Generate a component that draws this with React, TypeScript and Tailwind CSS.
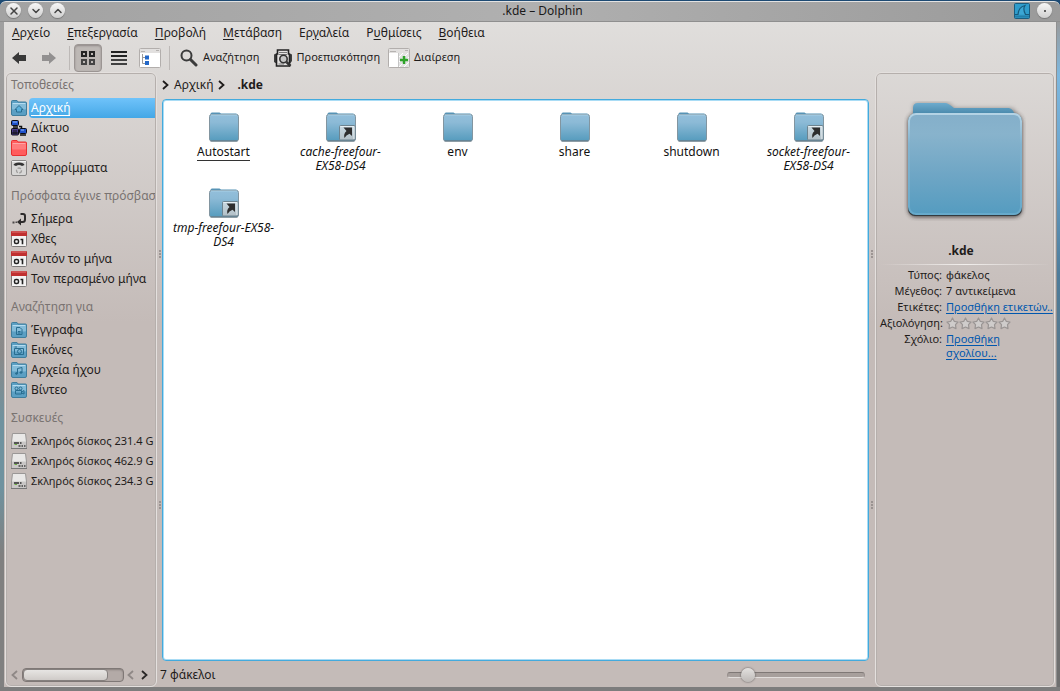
import type { ReactNode } from "react";
import { ChevronDown, ChevronUp, X } from "lucide-react";

type Place = { label: string; icon: ReactNode; active?: boolean };

const menus = [
  ["", "Α", "ρχείο"],
  ["", "Ε", "πεξεργασία"],
  ["", "Π", "ροβολή"],
  ["", "Μ", "ετάβαση"],
  ["Ερ", "γ", "αλεία"],
  ["Ρ", "υ", "θμίσεις"],
  ["", "Β", "οήθεια"],
];

const files = [
  { lines: ["Autostart"], current: true },
  { lines: ["cache-freefour-", "EX58-DS4"], link: true },
  { lines: ["env"] },
  { lines: ["share"] },
  { lines: ["shutdown"] },
  { lines: ["socket-freefour-", "EX58-DS4"], link: true },
  { lines: ["tmp-freefour-EX58-", "DS4"], link: true },
];

function Arrow({ left, className = "" }: { left?: boolean; className?: string }) {
  return (
    <svg aria-hidden="true" viewBox="0 0 7 10" className={`h-2.5 w-[7px] shrink-0 ${className}`} fill="none" stroke="currentColor" strokeWidth="1.8">
      <path d={left ? "M6 1L1.500 5L6 9" : "M1 1L5.500 5L1 9"} />
    </svg>
  );
}

function PlaceFolder({ tone = "blue", children }: { tone?: "blue" | "red"; children?: ReactNode }) {
  const red = tone === "red";
  return (
    <svg aria-hidden="true" viewBox="0 0 16 16" className="h-4 w-4 shrink-0">
      <path d="M.5 4V1.5Q.5.5 1.5.5H6L7 2H14.5Q15.5 2 15.5 3V14Q15.5 15.5 14 15.5H2Q.5 15.5.5 14Z" fill={red ? "#ff5c5c" : "#5b9fc3"} stroke={red ? "#e83030" : "#3f7d9c"} />
      <rect x="1" y="3.5" width="14" height="6" rx="1" fill={red ? "#ff8585" : "#8fc3de"} opacity=".8" />
      <path d="M1.5 3.5H14.5" stroke={red ? "#ffa5a5" : "#b5dcf0"} />
      {children && (
        <g fill="none" stroke="#286d90" strokeWidth="1">
          {children}
        </g>
      )}
    </svg>
  );
}

function NetworkIcon() {
  return (
    <svg aria-hidden="true" viewBox="0 0 16 16" className="h-4 w-4 shrink-0">
      <rect x=".5" y=".5" width="7" height="5" rx="1" fill="#1f50c8" stroke="#0b0b14" />
      <path d="M2 2H6" stroke="#8db8ff" />
      <path d="M2 7H7M8 6.500H10.500V8" fill="none" stroke="#111" strokeWidth="1.500" />
      <rect x=".5" y="8.500" width="7" height="6.500" rx="1" fill="#4a3c8c" stroke="#0b0b14" />
      <path d="M1 13H7M3 10V14M5 10V14" stroke="#111" />
      <rect x="8.500" y="8.500" width="7" height="5" rx="1" fill="#1f50c8" stroke="#0b0b14" />
      <path d="M10 10H13" stroke="#8db8ff" />
      <path d="M9 15H15" stroke="#111" strokeWidth="1.500" />
    </svg>
  );
}

function TrashIcon() {
  return (
    <svg aria-hidden="true" viewBox="0 0 16 16" className="h-4 w-4 shrink-0">
      <rect x=".5" y=".5" width="15" height="15" rx="1.500" fill="#d8d7d6" stroke="#898786" />
      <path d="M1 1.500H15" stroke="#f2f2f2" />
      <path d="M2.500 5Q3 2.500 8 2.500T13.500 5L11 6Q8 4 5 6Z" fill="#333" />
      <circle cx="8" cy="10.500" r="2.500" fill="none" stroke="#a09e9d" strokeWidth="1.300" strokeDasharray="3.500 1.500" />
    </svg>
  );
}

function TodayIcon() {
  return (
    <svg aria-hidden="true" viewBox="0 0 16 16" className="h-4 w-4 shrink-0">
      <path d="M9.500 3H12Q14 3 14 5V8.500Q14 11 11.500 11H8" fill="none" stroke="#2d2b2b" strokeWidth="2" />
      <path d="M10 7.500V14.500L6 11Z" fill="#2d2b2b" />
      <path d="M1.500 10.500H3.500V12.500H1.500ZM4.500 10.500H6V12H4.500Z" fill="#4c4949" />
    </svg>
  );
}

function CalendarIcon() {
  return (
    <svg aria-hidden="true" viewBox="0 0 16 16" className="h-4 w-4 shrink-0">
      <rect x=".5" y="1" width="15" height="14.500" rx="1" fill="#f4f3f3" stroke="#7e7b7a" />
      <path d="M0 1Q0 0 1 0H15Q16 0 16 1V5H0Z" fill="#c03030" />
      <path d="M1 1H15" stroke="#de7777" />
      <rect x="3.500" y="8.500" width="4" height="4" rx="1.500" fill="none" stroke="#222" strokeWidth="1.500" />
      <path d="M9.500 8.500H11.500V13.200" fill="none" stroke="#222" strokeWidth="1.600" />
    </svg>
  );
}

function DiskIcon() {
  return (
    <svg aria-hidden="true" viewBox="0 0 16 16" className="h-4 w-4 shrink-0">
      <path d="M1.500 .5H14.500L15.500 9V15.500H.5V9Z" fill="#e9e8e7" stroke="#9a9796" />
      <rect x="1" y="8.500" width="14" height="6.500" fill="#c9c7c6" />
      <path d="M3 10H8M9 10H10.500" stroke="#555" strokeWidth="1.800" />
      <path d="M3.500 11.500H6" stroke="#6fae45" />
      <path d="M7.500 13H9.500M10.500 13H12M13 13H14.500" stroke="#444" strokeWidth="1.600" />
      <path d="M0 15.500H16" stroke="#777" />
    </svg>
  );
}

const sections: { title: string; compact?: boolean; items: Place[] }[] = [
  {
    title: "Τοποθεσίες",
    items: [
      { label: "Αρχική", active: true, icon: <PlaceFolder><path d="M4 9.500L8 5.500L12 9.500H10.500V12H5.500V9.500Z" fill="#5bb1dc" /></PlaceFolder> },
      { label: "Δίκτυο", icon: <NetworkIcon /> },
      { label: "Root", icon: <PlaceFolder tone="red" /> },
      { label: "Απορρίμματα", icon: <TrashIcon /> },
    ],
  },
  {
    title: "Πρόσφατα έγινε πρόσβασ",
    items: [
      { label: "Σήμερα", icon: <TodayIcon /> },
      { label: "Χθες", icon: <CalendarIcon /> },
      { label: "Αυτόν το μήνα", icon: <CalendarIcon /> },
      { label: "Τον περασμένο μήνα", icon: <CalendarIcon /> },
    ],
  },
  {
    title: "Αναζήτηση για",
    items: [
      { label: "Έγγραφα", icon: <PlaceFolder><path d="M5.500 5.500H9L11 7.500V12.500H5.500ZM7 9.500H9.500M7 11H9.500" /></PlaceFolder> },
      { label: "Εικόνες", icon: <PlaceFolder><path d="M3.500 6.500H12.500V12.500H3.500ZM3.500 5H6" /><circle cx="8.500" cy="9.500" r="2" /></PlaceFolder> },
      { label: "Αρχεία ήχου", icon: <PlaceFolder><path d="M6.500 11.500V6.500L11 5.500V10.500" /><ellipse cx="5.500" cy="11.500" rx="1" ry=".8" fill="#286d90" /><ellipse cx="10" cy="10.500" rx="1" ry=".8" fill="#286d90" /></PlaceFolder> },
      { label: "Βίντεο", icon: <PlaceFolder><circle cx="5.500" cy="6.500" r="1.500" /><circle cx="9.500" cy="6.500" r="1.500" /><path d="M4.500 8.500H10.500V12H4.500ZM10.500 10L13 8.500V12L10.500 11" /></PlaceFolder> },
    ],
  },
  {
    title: "Συσκευές",
    compact: true,
    items: [
      { label: "Σκληρός δίσκος 231.4 G", icon: <DiskIcon /> },
      { label: "Σκληρός δίσκος 462.9 G", icon: <DiskIcon /> },
      { label: "Σκληρός δίσκος 234.3 G", icon: <DiskIcon /> },
    ],
  },
];

function WindowButton({ label, children }: { label: string; children: ReactNode }) {
  return (
    <button
      aria-label={label}
      className="flex h-[15px] w-[15px] items-center justify-center rounded-full bg-gradient-to-b from-[#f7f7f7] to-[#cfcfcf] text-[#444] shadow-[0_1px_1px_#777]"
    >
      {children}
    </button>
  );
}

function FolderIcon({ link }: { link?: boolean }) {
  return (
    <svg aria-hidden="true" viewBox="0 0 30 30" className="h-[30px] w-[30px]">
      <defs>
        <linearGradient id="folder" x1="0" y1="0" x2="0" y2="1">
          <stop offset="0" stopColor="#93bfdb" />
          <stop offset=".3" stopColor="#8cbad6" />
          <stop offset="1" stopColor="#559bbd" />
        </linearGradient>
        <linearGradient id="emblem" x1="0" y1="0" x2="0" y2="1">
          <stop offset="0" stopColor="#c9dae3" />
          <stop offset="1" stopColor="#b2bfc6" />
        </linearGradient>
      </defs>
      <path d="M1.500 4V2Q1.500.5 3 .5H10.500L12 1.500H27Q28.500 1.500 28.500 3V5Z" fill="#5793b5" />
      <rect x=".5" y="2.500" width="29" height="26.500" rx="2" fill="url(#folder)" stroke="#8295a0" />
      <path d="M2 3H28" stroke="#a8cfe5" />
      <path d="M1.500 29H28.500" stroke="#5c717c" />
      {link && (
        <g>
          <rect x="13.500" y="13.500" width="15.500" height="14.500" rx="1" fill="url(#emblem)" stroke="#6d8490" />
          <path d="M14.500 14.500H28V27" fill="none" stroke="#e7eff3" />
          <path d="M17.500 15.500H26V24L23.500 21.800Q20 23 18.500 26Q17.200 22 20.500 19Z" fill="#2e2e2e" />
        </g>
      )}
    </svg>
  );
}

function LargeFolder() {
  return (
    <svg aria-hidden="true" viewBox="0 0 122 122" className="h-[122px] w-[122px]">
      <defs>
        <linearGradient id="front" x1="0" y1="0" x2="0" y2="1">
          <stop offset="0" stopColor="#84afca" />
          <stop offset=".2" stopColor="#88b3cc" />
          <stop offset=".6" stopColor="#6fa6c5" />
          <stop offset="1" stopColor="#559cc0" />
        </linearGradient>
        <linearGradient id="back" x1="0" y1="0" x2="0" y2="1">
          <stop offset="0" stopColor="#6dabcd" />
          <stop offset="1" stopColor="#3f7fa2" />
        </linearGradient>
        <linearGradient id="rim" x1="0" y1="0" x2="0" y2="1">
          <stop offset="0" stopColor="#b4d3e5" />
          <stop offset=".3" stopColor="#82b3cf" />
          <stop offset="1" stopColor="#67aacb" />
        </linearGradient>
        <filter id="soft" x="-10%" y="-10%" width="120%" height="120%">
          <feGaussianBlur stdDeviation="2" />
        </filter>
      </defs>
      <path d="M9 16V9Q9 4 14 4H43Q46 4 50 9H107Q112 10 112 15V20H9Z" fill="#555" opacity=".5" filter="url(#soft)" />
      <rect x="4" y="15" width="114" height="103" rx="8" fill="#2e2a29" opacity=".85" filter="url(#soft)" />
      <path d="M9 18V9Q9 4 14 4H41Q44 4 50 9H105Q110 10 111 18Z" fill="url(#back)" />
      <rect x="4" y="15" width="114" height="102" rx="7" fill="#343b3f" />
      <rect x="5" y="15" width="112" height="100" rx="7" fill="url(#front)" stroke="url(#rim)" strokeWidth="2" />
    </svg>
  );
}

function Star() {
  return (
    <svg aria-hidden="true" viewBox="0 0 13 13" className="h-[13px] w-[13px]">
      <path d="M6.500 1L8.200 4.300L12 5L9.500 7.700L10 11.600L6.500 10L3 11.600L3.500 7.700L1 5L4.800 4.300Z" fill="#cfcccb" stroke="#9a9594" strokeWidth="1.200" strokeLinejoin="round" />
    </svg>
  );
}

function Grip() {
  return (
    <div className="flex flex-col gap-px">
      <span className="h-0.5 w-0.5 rounded-full bg-[#8d8684]" />
      <span className="h-0.5 w-0.5 rounded-full bg-[#8d8684]" />
      <span className="h-0.5 w-0.5 rounded-full bg-[#8d8684]" />
    </div>
  );
}

function Splitter() {
  return (
    <div className="flex w-full flex-col items-center pt-[178px]">
      <Grip />
      <div className="h-[243px]" />
      <Grip />
    </div>
  );
}

function TitleBar() {
  return (
    <header className="flex h-[21px] items-center rounded-t-md border-t border-t-[#e2e2e2] border-b border-b-[#8f8f8f] bg-gradient-to-r from-[#a2a2a2] via-[#b0b0b0] to-[#9a9a9a] pb-0.5">
      <div className="flex w-20 gap-[7px] pl-1.5">
        <WindowButton label="Κλείσιμο"><X size={12} strokeWidth={3} /></WindowButton>
        <WindowButton label="Ελαχιστοποίηση"><ChevronDown size={12} strokeWidth={3} /></WindowButton>
        <WindowButton label="Μεγιστοποίηση"><ChevronUp size={12} strokeWidth={3} /></WindowButton>
      </div>
      <h1 className="flex-1 text-center text-[12px] leading-4 text-[#1a1a1a]">.kde – Dolphin</h1>
      <div className="flex w-[55px] items-center gap-[7px] pl-[9px]">
        <svg aria-hidden="true" viewBox="0 0 16 16" className="h-4 w-4">
          <rect x=".5" y=".5" width="15" height="15" rx="1" fill="#2f9ccb" stroke="#1a5d80" />
          <path d="M1 11.500H4Q4.500 4 11 2.500Q8.500 6 11.500 11.500H15" fill="#3ba6d4" stroke="#17597b" strokeWidth="1.200" />
          <path d="M1 13.500H15" stroke="#247fa9" strokeWidth="2" />
        </svg>
        <WindowButton label="Σε όλες τις επιφάνειες"><span className="h-0.5 w-0.5 rounded-full bg-[#333]" /></WindowButton>
      </div>
    </header>
  );
}

function Toolbar() {
  return (
    <div className="flex h-[29px] items-center text-[11px]">
      <button aria-label="Πίσω" className="ml-[7px] flex h-6 w-[22px] items-center">
        <svg viewBox="0 0 16 14" className="h-3.5 w-4"><path d="M1 7L8 1V4H15V10H8V13Z" fill="#383838" /></svg>
      </button>
      <button aria-label="Μπροστά" className="ml-2 flex h-6 w-[22px] items-center">
        <svg viewBox="0 0 16 14" className="h-3.5 w-4"><path d="M15 7L8 1V4H1V10H8V13Z" fill="#929090" /></svg>
      </button>
      <span className="ml-1.5 h-6 w-px bg-[#bdb9b7]" />
      <button aria-label="Εικονίδια" aria-pressed="true" className="ml-1 flex h-7 w-7 items-center justify-center rounded border border-[#9b9593] bg-[#bdb8b5] shadow-[inset_0_1px_2px_#908a88]">
        <svg viewBox="0 0 14 14" className="h-3.5 w-3.5" fill="none" strokeWidth="2">
          <path d="M1 1H5V5H1ZM9 1H13V5H9Z" stroke="#242424" />
          <path d="M1 9H5V13H1ZM9 9H13V13H9Z" stroke="#444" />
        </svg>
      </button>
      <button aria-label="Συμπαγής" className="ml-[9px] flex h-7 w-5 items-center">
        <svg viewBox="0 0 16 14" className="h-3.5 w-4" strokeWidth="2">
          <path d="M0 1H16M0 5H16" stroke="#222" /><path d="M0 9H16M0 13H16" stroke="#404040" />
        </svg>
      </button>
      <button aria-label="Λεπτομέρειες" className="ml-2 flex h-7 w-6 items-center">
        <svg viewBox="0 0 22 20" className="h-5 w-[22px]">
          <rect x=".5" y=".5" width="21" height="19" rx="1" fill="#fff" stroke="#b2aeac" />
          <path d="M1 1H21V5H1Z" fill="#e2e0df" /><path d="M2 3.500H6M17 2.500H20" stroke="#b6b3b1" />
          <path d="M3.500 6V15.500H6M3.500 9.500H6" stroke="#999" fill="none" />
          <rect x="6" y="7.500" width="4" height="4" fill="#2468c8" /><rect x="6" y="13" width="4" height="4" fill="#2468c8" />
        </svg>
      </button>
      <span className="ml-1.5 h-6 w-px bg-[#bdb9b7]" />
      <button className="ml-2.5 flex h-7 items-center gap-[5px] whitespace-nowrap">
        <svg viewBox="0 0 18 18" className="h-[18px] w-[18px]" fill="none" stroke="#3b3b3b">
          <circle cx="6.500" cy="6.500" r="5" strokeWidth="2" /><path d="M10.500 10.500L16 16" strokeWidth="3" strokeLinecap="round" />
        </svg>
        Αναζήτηση
      </button>
      <button className="ml-3.5 flex h-7 items-center gap-[5px] whitespace-nowrap">
        <svg viewBox="0 0 18 18" className="h-[18px] w-[18px]">
          <path d="M0 6Q0 5 1 5H17Q18 5 18 6V12L16.500 14H1.500L0 13Z" fill="#404040" />
          <path d="M3.500 1H14.500V5H15.500V17H2.500V5H3.500Z" fill="#e4e2e1" stroke="#222" strokeWidth="1.600" />
          <path d="M5 3.500H13M4.500 5.500H13M4.500 15H10" stroke="#777" />
          <circle cx="9.500" cy="10" r="3.700" fill="#c6c6c6" stroke="#333" strokeWidth="1.600" />
          <path d="M12.500 13L16.500 17" stroke="#333" strokeWidth="2.500" />
        </svg>
        Προεπισκόπηση
      </button>
      <button className="ml-2 flex h-7 items-center gap-1 whitespace-nowrap">
        <svg viewBox="0 0 22 20" className="h-5 w-[22px]">
          <rect x=".5" y=".5" width="21" height="19" rx="1" fill="#fff" stroke="#b2aeac" />
          <path d="M1 1H21V5H1Z" fill="#e2e0df" /><path d="M2 3.500H8M17 2.500H20" stroke="#b6b3b1" />
          <rect x="11" y="5" width="10" height="14" fill="#e3e3e3" />
          <path d="M11 9L15 5M11 14L20 5M11 19L21 9M16 19L21 14" stroke="#fff" /><path d="M10.500 5V19" stroke="#c5c5c5" />
          <path d="M12 12H20M16 8V16" stroke="#2fa32a" strokeWidth="2.500" />
        </svg>
        Διαίρεση
      </button>
    </div>
  );
}

function PlacesPanel() {
  return (
    <aside className="flex w-[152px] shrink-0 flex-col rounded-md border border-[#e4e0de] shadow-[inset_0_0_0_1px_#b5afac]">
      <nav id="places" className="flex-1 overflow-hidden px-px">
        {sections.map((section) => (
          <section key={section.title} className="mb-1.5">
            <h2 className="overflow-hidden pl-1 leading-6 whitespace-nowrap text-[#797371]">{section.title}</h2>
            <ul className={section.compact ? "mt-px text-[11px]" : "mt-px"}>
              {section.items.map((item) => (
                <li key={item.label}>
                  <a href="#" className="flex h-5 items-center gap-0.5 pl-1 whitespace-nowrap">
                    {item.icon}
                    {item.active ? (
                      <span className="flex h-5 flex-1 items-center rounded-l-sm bg-gradient-to-b from-[#6fc3fa] to-[#43a7e6] pl-0.5 text-white">
                        <span className="border-b border-white leading-[15px]">{item.label}</span>
                      </span>
                    ) : (
                      <span className="flex-1 overflow-hidden pl-0.5">{item.label}</span>
                    )}
                  </a>
                </li>
              ))}
            </ul>
          </section>
        ))}
      </nav>
      <div className="flex h-[22px] items-center pl-[5px]">
        <button aria-label="Αριστερά" className="mr-1 text-[#8f8886]"><Arrow left /></button>
        <div role="scrollbar" aria-orientation="horizontal" aria-controls="places" aria-valuenow={0} className="h-3.5 w-[102px] rounded border border-[#7f7876] bg-[#b3aaa7] shadow-[inset_0_1px_2px_#857d7b]">
          <div className="h-3 w-[85px] rounded border border-[#85807e] bg-gradient-to-b from-[#e7e5e3] to-[#cfcbc8]" />
        </div>
        <button aria-label="Αριστερά" className="ml-[3px] text-[#8f8886]"><Arrow left /></button>
        <button aria-label="Δεξιά" className="ml-[7px] text-[#2a2727]"><Arrow /></button>
      </div>
    </aside>
  );
}

function FileView() {
  return (
    <main className="flex min-w-0 flex-1 flex-col">
      <nav className="flex h-[27px] items-center pb-0.5">
        <Arrow />
        <a href="#" className="ml-[5px]">Αρχική</a>
        <Arrow className="ml-[5px]" />
        <a href="#" className="ml-3 font-bold">.kde</a>
      </nav>
      <ul className="grid flex-1 auto-rows-[76px] grid-cols-[repeat(auto-fill,117px)] content-start rounded-sm border border-[#43aadd] bg-white pt-3 pl-0.5 shadow-[inset_0_0_0_1px_#a9dcf5]">
        {files.map((file) => (
          <li key={file.lines[0]} className="flex flex-col items-center text-[12px] leading-[14px] text-[#111]">
            <FolderIcon link={file.link} />
            <span className={`mt-[3px] text-center whitespace-nowrap ${file.link ? "italic" : ""} ${file.current ? "border-b border-[#333] pb-px" : ""}`}>
              {file.lines.map((line) => (
                <span key={line} className="block">{line}</span>
              ))}
            </span>
          </li>
        ))}
      </ul>
      <footer className="flex h-[26px] items-center justify-between pt-0.5 pr-1">
        <span className="-ml-0.5">7 φάκελοι</span>
        <input
          type="range"
          aria-label="Μέγεθος εικονιδίων"
          min={0}
          max={19}
          defaultValue={2}
          className="h-4 w-[138px] appearance-none bg-transparent [&::-webkit-slider-runnable-track]:h-1.5 [&::-webkit-slider-runnable-track]:rounded-full [&::-webkit-slider-runnable-track]:border [&::-webkit-slider-runnable-track]:border-t-[#7f7876] [&::-webkit-slider-runnable-track]:border-x-[#9a9290] [&::-webkit-slider-runnable-track]:border-b-[#e2dedc] [&::-webkit-slider-runnable-track]:bg-[#a79f9c] [&::-webkit-slider-thumb]:-mt-[5px] [&::-webkit-slider-thumb]:h-3.5 [&::-webkit-slider-thumb]:w-3.5 [&::-webkit-slider-thumb]:appearance-none [&::-webkit-slider-thumb]:rounded-full [&::-webkit-slider-thumb]:bg-gradient-to-b [&::-webkit-slider-thumb]:from-[#e3e1df] [&::-webkit-slider-thumb]:to-[#bdb9b7] [&::-webkit-slider-thumb]:shadow-[0_0_2px_#444]"
        />
      </footer>
    </main>
  );
}

function InfoPanel() {
  return (
    <aside className="flex w-[180px] shrink-0 flex-col rounded-md border border-[#e4e0de] pt-[26px] pl-1 shadow-[inset_0_0_0_1px_#b5afac]">
      <div className="flex justify-center pr-1"><LargeFolder /></div>
      <h2 className="mt-[21px] pr-3 pb-1 text-center leading-[18px] font-bold">.kde</h2>
      <div className="mr-1 h-px bg-gradient-to-r from-transparent via-[#f2efed] to-transparent" />
      <dl className="mt-0.5 grid grid-cols-[62px_1fr] gap-x-1 text-[11px] leading-4 whitespace-nowrap">
        <dt className="text-right">Τύπος:</dt>
        <dd>φάκελος</dd>
        <dt className="text-right">Μέγεθος:</dt>
        <dd>7 αντικείμενα</dd>
        <dt className="text-right">Ετικέτες:</dt>
        <dd className="min-w-0"><a href="#" className="text-[#0057ae] underline underline-offset-2">Προσθήκη ετικετών..</a></dd>
        <dt className="text-right">Αξιολόγηση:</dt>
        <dd className="flex items-center" aria-label="0 από 5">
          <Star /><Star /><Star /><Star /><Star />
        </dd>
        <dt className="text-right">Σχόλιο:</dt>
        <dd className="pt-px pr-4 leading-[14px] whitespace-normal"><a href="#" className="text-[#0057ae] underline underline-offset-2">Προσθήκη σχολίου...</a></dd>
      </dl>
    </aside>
  );
}

export default function App() {
  return (
    <div className="flex min-h-screen flex-col bg-[#1d4a73] pt-px font-['Noto_Sans','Open_Sans',sans-serif] text-[12px] text-[#1f1c1b]">
      <TitleBar />
      <div className="flex flex-1 border-b-4 border-[#7d7d7d]">
        <div className="w-1 bg-[linear-gradient(#a0a0a0,#8a8a8a_50%,#6f929f_60%,#6f929f_70%,#808080_80%)]" />
        <div className="flex min-w-0 flex-1 flex-col bg-[linear-gradient(#e0dedc_0px,#c4bbb8_300px)]">
          <nav className="flex h-[21px] items-center gap-[17px] pl-2">
            {menus.map(([before, key, after]) => (
              <button key={key} className="leading-4 whitespace-nowrap">
                {before}<span className="underline underline-offset-2">{key}</span>{after}
              </button>
            ))}
          </nav>
          <Toolbar />
          <div className="flex flex-1 px-px">
            <PlacesPanel />
            <div className="flex w-[5px] shrink-0"><Splitter /></div>
            <FileView />
            <div className="flex w-1.5 shrink-0"><Splitter /></div>
            <InfoPanel />
          </div>
        </div>
        <div className="w-1 border-l border-[#8f8f8f] bg-[linear-gradient(#9a9a9a,#7db8e0_8%,#6ca6cf_20%,#4d7c9b_38%,#5f7480_60%,#6f6f6f_90%)]" />
      </div>
    </div>
  );
}
